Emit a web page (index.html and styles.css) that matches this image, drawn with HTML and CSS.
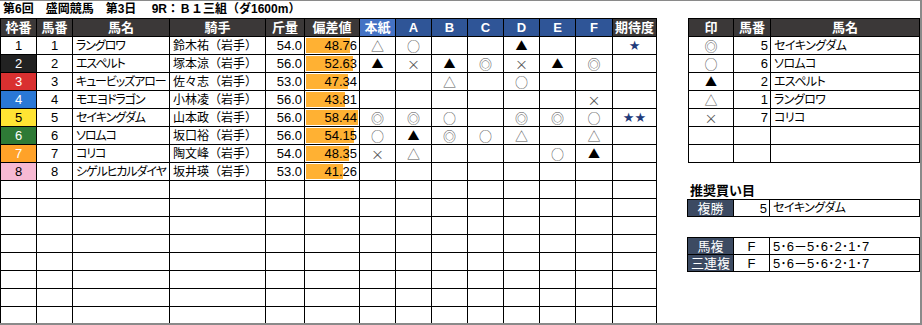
FILE: index.html
```html
<!DOCTYPE html>
<html lang="ja">
<head>
<meta charset="utf-8">
<link rel="stylesheet" href="styles.css">
</head>
<body>
<div class="frame">
  <div class="left">
    <div class="title">第6回　盛岡競馬　第3日　 9R：Ｂ１三組（ダ1600m）</div>
    <table class="main">
      <colgroup>
        <col style="width:36px"><col style="width:36px"><col style="width:97px"><col style="width:96px"><col style="width:39px"><col style="width:55px">
        <col style="width:36px"><col style="width:36px"><col style="width:36px"><col style="width:36px"><col style="width:36px"><col style="width:36px"><col style="width:37px"><col style="width:44px">
      </colgroup>
      <thead>
        <tr>
          <th>枠番</th><th>馬番</th><th>馬名</th><th>騎手</th><th>斤量</th><th>偏差値</th>
          <th class="hon">本紙</th><th class="pr">A</th><th class="pr">B</th><th class="pr">C</th><th class="pr">D</th><th class="pr">E</th><th class="pr">F</th><th>期待度</th>
        </tr>
      </thead>
      <tbody>
        <tr><td class="w1">1</td><td class="c">1</td><td class="nm">ラングロワ</td><td class="jk">鈴木祐（岩手）</td><td class="r">54.0</td><td class="hs" style="--w:44px">48.76</td><td class="mk">△</td><td class="mk">○</td><td class="mk"></td><td class="mk"></td><td class="mk b">▲</td><td class="mk"></td><td class="mk"></td><td class="st">★</td></tr>
        <tr><td class="w2">2</td><td class="c">2</td><td class="nm">エスペルト</td><td class="jk">塚本涼（岩手）</td><td class="r">56.0</td><td class="hs" style="--w:47px">52.63</td><td class="mk b">▲</td><td class="mk">×</td><td class="mk b">▲</td><td class="mk">◎</td><td class="mk">×</td><td class="mk b">▲</td><td class="mk">◎</td><td class="st"></td></tr>
        <tr><td class="w3">3</td><td class="c">3</td><td class="nm">キュービッズアロー</td><td class="jk">佐々志（岩手）</td><td class="r">53.0</td><td class="hs" style="--w:42px">47.34</td><td class="mk"></td><td class="mk"></td><td class="mk">△</td><td class="mk"></td><td class="mk">○</td><td class="mk"></td><td class="mk"></td><td class="st"></td></tr>
        <tr><td class="w4">4</td><td class="c">4</td><td class="nm">モエヨドラゴン</td><td class="jk">小林凌（岩手）</td><td class="r">56.0</td><td class="hs" style="--w:39px">43.81</td><td class="mk"></td><td class="mk"></td><td class="mk"></td><td class="mk"></td><td class="mk"></td><td class="mk"></td><td class="mk">×</td><td class="st"></td></tr>
        <tr><td class="w5">5</td><td class="c">5</td><td class="nm">セイキングダム</td><td class="jk">山本政（岩手）</td><td class="r">56.0</td><td class="hs" style="--w:52px">58.44</td><td class="mk">◎</td><td class="mk">◎</td><td class="mk">○</td><td class="mk"></td><td class="mk">◎</td><td class="mk">◎</td><td class="mk">○</td><td class="st">★★</td></tr>
        <tr><td class="w6">6</td><td class="c">6</td><td class="nm">ソロムコ</td><td class="jk">坂口裕（岩手）</td><td class="r">56.0</td><td class="hs" style="--w:48px">54.15</td><td class="mk">○</td><td class="mk b">▲</td><td class="mk">◎</td><td class="mk">○</td><td class="mk">△</td><td class="mk"></td><td class="mk">△</td><td class="st"></td></tr>
        <tr><td class="w7">7</td><td class="c">7</td><td class="nm">コリコ</td><td class="jk">陶文峰（岩手）</td><td class="r">54.0</td><td class="hs" style="--w:43px">48.35</td><td class="mk">×</td><td class="mk">△</td><td class="mk"></td><td class="mk"></td><td class="mk"></td><td class="mk">○</td><td class="mk b">▲</td><td class="st"></td></tr>
        <tr><td class="w8">8</td><td class="c">8</td><td class="nm">シゲルヒカルダイヤ</td><td class="jk">坂井瑛（岩手）</td><td class="r">53.0</td><td class="hs" style="--w:37px">41.26</td><td class="mk"></td><td class="mk"></td><td class="mk"></td><td class="mk"></td><td class="mk"></td><td class="mk"></td><td class="mk"></td><td class="st"></td></tr>
        <tr><td></td><td></td><td></td><td></td><td></td><td></td><td></td><td></td><td></td><td></td><td></td><td></td><td></td><td></td></tr>
        <tr><td></td><td></td><td></td><td></td><td></td><td></td><td></td><td></td><td></td><td></td><td></td><td></td><td></td><td></td></tr>
        <tr><td></td><td></td><td></td><td></td><td></td><td></td><td></td><td></td><td></td><td></td><td></td><td></td><td></td><td></td></tr>
        <tr><td></td><td></td><td></td><td></td><td></td><td></td><td></td><td></td><td></td><td></td><td></td><td></td><td></td><td></td></tr>
        <tr><td></td><td></td><td></td><td></td><td></td><td></td><td></td><td></td><td></td><td></td><td></td><td></td><td></td><td></td></tr>
        <tr><td></td><td></td><td></td><td></td><td></td><td></td><td></td><td></td><td></td><td></td><td></td><td></td><td></td><td></td></tr>
        <tr><td></td><td></td><td></td><td></td><td></td><td></td><td></td><td></td><td></td><td></td><td></td><td></td><td></td><td></td></tr>
        <tr><td></td><td></td><td></td><td></td><td></td><td></td><td></td><td></td><td></td><td></td><td></td><td></td><td></td><td></td></tr>
      </tbody>
    </table>
  </div>
  <div class="right">
    <table class="pick">
      <colgroup><col style="width:45px"><col style="width:37px"><col></colgroup>
      <thead><tr><th>印</th><th>馬番</th><th>馬名</th></tr></thead>
      <tbody>
        <tr><td class="mk">◎</td><td class="r">5</td><td class="nm2">セイキングダム</td></tr>
        <tr><td class="mk">○</td><td class="r">6</td><td class="nm2">ソロムコ</td></tr>
        <tr><td class="mk b">▲</td><td class="r">2</td><td class="nm2">エスペルト</td></tr>
        <tr><td class="mk">△</td><td class="r">1</td><td class="nm2">ラングロワ</td></tr>
        <tr><td class="mk">×</td><td class="r">7</td><td class="nm2">コリコ</td></tr>
        <tr><td></td><td></td><td></td></tr>
        <tr><td></td><td></td><td></td></tr>
      </tbody>
    </table>
    <div class="rec-title">推奨買い目</div>
    <table class="buy">
      <colgroup><col style="width:46px"><col style="width:36px"><col></colgroup>
      <tr><td class="lbl">複勝</td><td class="r">5</td><td class="nm2">セイキングダム</td></tr>
    </table>
    <table class="buy buy2">
      <colgroup><col style="width:46px"><col style="width:36px"><col></colgroup>
      <tr><td class="lbl">馬複</td><td class="c">F</td><td class="val">5･6－5･6･2･1･7</td></tr>
      <tr><td class="lbl">三連複</td><td class="c">F</td><td class="val">5･6－5･6･2･1･7</td></tr>
    </table>
  </div>
</div>
</body>
</html>
```

FILE: styles.css
```css
* { box-sizing: border-box; }
html, body { margin: 0; padding: 0; background: #fff; }
body {
  font-family: "Liberation Sans", "Noto Sans CJK JP", sans-serif;
  font-size: 13px;
  color: #000;
}
.frame {
  width: 922px;
  height: 325px;
  border-top: 1px solid #8a8a8a;
  border-right: 2px solid #8a8a8a;
  border-bottom: 2px solid #8a8a8a;
  display: flex;
  gap: 32px;
  overflow: hidden;
}
.left { width: 656px; flex: none; }
.title {
  height: 17px;
  line-height: 17px;
  padding-left: 3px;
  font-weight: bold;
  font-size: 12px;
  white-space: pre;
}
table {
  border-collapse: collapse;
  table-layout: fixed;
}
.main { width: 656px; }
th, td {
  border: 1px solid #000;
  padding: 0;
  height: 18px;
  line-height: 16px;
  white-space: nowrap;
  overflow: hidden;
}
th {
  background: #3b3838;
  color: #fff;
  font-weight: bold;
  font-size: 13px;
  text-align: center;
  font-feature-settings: "palt";
}
th.hon { background: #4472c4; }
th.pr { background: #2f5597; }
.c { text-align: center; }
.r { text-align: right; padding-right: 2px; }
.nm {
  padding-left: 3px;
  font-size: 12px;
  font-feature-settings: "palt";
  letter-spacing: -1.1px;
}
.nm2 {
  padding-left: 3px;
  font-size: 12px;
  font-feature-settings: "palt";
  letter-spacing: -0.6px;
}
.jk {
  padding-left: 3px;
  font-size: 12px;
}
.hs {
  text-align: right;
  padding-right: 2px;
  background: linear-gradient(#ffb133, #ffb133) no-repeat 1px 1px / var(--w) 15px;
}
.mk {
  text-align: center;
  color: #555;
  font-family: "Noto Sans CJK JP", sans-serif;
  font-size: 13px;
}
.mk.b { color: #000; font-size: 12px; }
.st {
  text-align: center;
  color: #1f3a7a;
  font-family: "DejaVu Sans", sans-serif;
  font-size: 13px;
}
.w1 { background: #fff; color: #000; text-align: center; }
.w2 { background: #222; color: #fff; text-align: center; }
.w3 { background: #d93030; color: #fff; text-align: center; }
.w4 { background: #2a78d6; color: #fff; text-align: center; }
.w5 { background: #ffe433; color: #000; text-align: center; }
.w6 { background: #2e7a36; color: #fff; text-align: center; }
.w7 { background: #ffa229; color: #fff; text-align: center; }
.w8 { background: #f7b9d3; color: #000; text-align: center; }
.right {
  width: 232px;
  flex: none;
  padding-top: 17px;
}
.pick { width: 232px; }
.rec-title {
  margin-top: 19px;
  height: 17px;
  line-height: 17px;
  padding-left: 2px;
  font-weight: bold;
  font-size: 13px;
}
.buy {
  width: 233px;
  margin-left: -1px;
}
.buy td { height: 17px; line-height: 15px; }
.buy .lbl {
  background: #3c4a62;
  color: #fff;
  text-align: center;
  font-size: 13px;
}
.buy2 { margin-top: 20px; }
.val { padding-left: 3px; font-size: 13px; }
```
